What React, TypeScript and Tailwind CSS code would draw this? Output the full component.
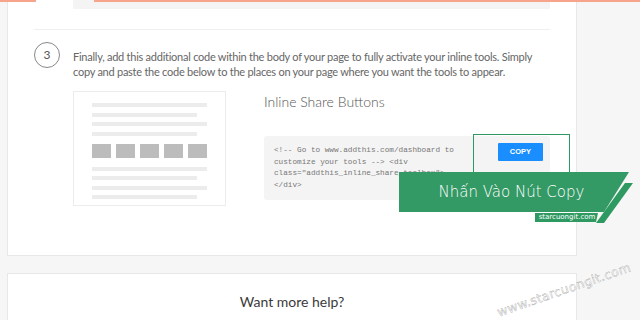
export default function App() {
  const lines = ['w-[115px]', 'w-[105px]', 'w-[115px]', 'w-[105px]']

  return (
    <div className="relative w-[640px] h-[320px] overflow-hidden bg-[#f6f6f6] font-['Lato',sans-serif]">
      {/* Step card */}
      <div className="ml-[7px] w-[570px] h-[256px] bg-white border border-t-0 border-[#e8e8e8] px-[26px]">
        <div className="ml-[39px] h-[9px] bg-[#f4f4f4]" />
        <div className="mt-[20px] h-px bg-[#efefef]" />

        <div className="mt-[12px] flex gap-[13px]">
          <div className="flex-shrink-0 w-[26px] h-[26px] rounded-full border border-[#888] flex items-center justify-center text-[12px] text-[#555]">
            3
          </div>
          <div className="pt-[7px] text-[11px] leading-[15px] text-[#666] tracking-[-0.25px]">
            Finally, add this additional code within the body of your page to fully activate your inline tools. Simply
            <br />
            copy and paste the code below to the places on your page where you want the tools to appear.
          </div>
        </div>

        <div className="mt-[12px] ml-[39px] flex gap-[38px]">
          {/* Thumbnail */}
          <div className="w-[153px] h-[115px] border border-[#ececec] pl-[18px] pt-[11px] flex flex-col gap-[5.5px]">
            {lines.map((w, i) => (
              <div key={i} className={`${w} h-[4px] bg-[#ececec]`} />
            ))}
            <div className="my-[3px] flex gap-[5px]">
              {[0, 1, 2, 3, 4].map((i) => (
                <div key={i} className="w-[19px] h-[14px] bg-[#bcbcbc]" />
              ))}
            </div>
            {lines.map((w, i) => (
              <div key={i} className={`${w} h-[4px] bg-[#ececec]`} />
            ))}
          </div>

          {/* Code */}
          <div className="flex-1">
            <div className="text-[14px] font-light text-[#555]">Inline Share Buttons</div>
            <div className="relative mt-[24px] h-[64px] bg-[#f4f4f4] rounded-[3px] pl-[10px] pt-[9px]">
              <div className="font-['Liberation_Mono',monospace] text-[7.7px] leading-[11.5px] text-[#777] whitespace-pre">
                {'<!-- Go to www.addthis.com/dashboard to\ncustomize your tools --> <div\nclass="addthis_inline_share_toolbox">\n</div>'}
              </div>
              <div className="absolute right-[7px] top-[7px] w-[45px] h-[18px] bg-[#1a8eff] rounded-[1px] flex items-center justify-center text-[7.5px] font-bold text-white font-['Liberation_Sans',sans-serif]">
                COPY
              </div>
            </div>
          </div>
        </div>
      </div>

      {/* Help card */}
      <div className="mt-[17px] ml-[7px] w-[570px] h-[60px] bg-white border border-[#e8e8e8] pt-[17px] text-center text-[14px] text-[#3a3a3a]">
        Want more help?
      </div>

      {/* Annotation overlays */}
      <div className="absolute left-0 top-0 w-[36px] h-[2px] bg-[#f6a58c]" />
      <div className="absolute left-[94px] top-0 w-[546px] h-[2px] bg-[#f6a58c]" />

      <div className="absolute left-[473px] top-[134px] w-[97px] h-[45px] border-[1.5px] border-[#2e9a62]" />

      <svg className="absolute left-0 top-0" width="640" height="320" viewBox="0 0 640 320">
        <polygon points="399,172 629,172 604,212 399,212" fill="#339965" />
        <polygon points="625,183 633,183 604,223 596,223" fill="#2e9a62" />
        <polygon points="535,213 598,213 596,222 535,222" fill="#2e9a62" />
      </svg>
      <div className="absolute left-[399px] top-[172px] w-[205px] h-[40px] flex items-center justify-center pl-[20px] text-[15px] text-white font-['DejaVu_Sans',sans-serif] font-light">
        Nhấn Vào Nút Copy
      </div>
      <div className="absolute left-[537px] top-[212px] w-[60px] h-[10px] flex items-center justify-center text-[7px] text-white font-['DejaVu_Sans',sans-serif]">
        starcuongit.com
      </div>

      <div className="absolute left-[494px] top-[281px] -rotate-[19deg] text-[12.5px] text-white font-['DejaVu_Sans',sans-serif] [-webkit-text-stroke:0.25px_#777] tracking-[0.3px]">
        www.starcuongit.com
      </div>
    </div>
  )
}
